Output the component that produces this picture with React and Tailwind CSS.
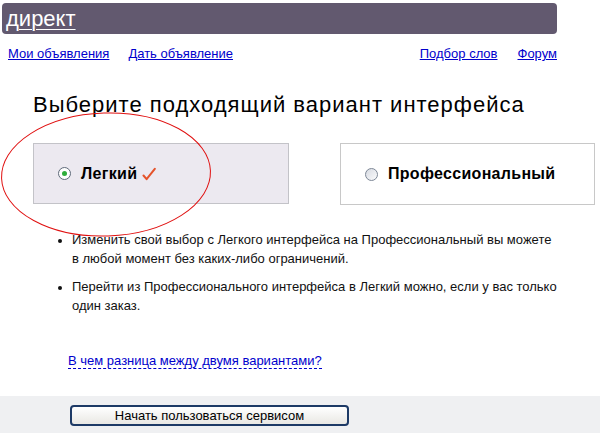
import React from "react";

const Radio = ({ checked }) => (
  <span
    className={`inline-flex items-center justify-center w-[13px] h-[13px] rounded-full border ${
      checked
        ? "border-[#5f6a7a] bg-white"
        : "border-[#7d8796] bg-gradient-to-br from-[#d7dbe2] to-[#fbfbfc]"
    }`}
  >
    {checked && <span className="w-[5px] h-[5px] rounded-full bg-[#2fae3b]" />}
  </span>
);

const Check = () => (
  <svg width="14" height="14" viewBox="0 0 14 14" className="ml-[5px]">
    <path
      d="M1.5 8.5 L4.6 12.2 L12.8 1.8"
      fill="none"
      stroke="#e5532b"
      strokeWidth="2"
      strokeLinecap="round"
      strokeLinejoin="round"
    />
  </svg>
);

export default function App() {
  return (
    <div className="relative w-[600px] h-[433px] overflow-hidden bg-white text-black font-['Liberation_Sans',Arial,sans-serif]">
      {/* Header */}
      <div className="pt-[3px] pl-[2px]">
        <div className="w-[555px] h-[31px] rounded-[4px] bg-[#62596f] pl-[4px] flex items-center">
          <a href="#" className="text-white text-[22px] leading-none underline underline-offset-[3px] decoration-1">
            директ
          </a>
        </div>
      </div>

      {/* Nav links */}
      <div className="w-[557px] mt-[12px] pl-[8px] flex justify-between text-[13px] leading-[16px] text-[#0000cc]">
        <div className="flex gap-[19px]">
          <a href="#" className="underline">Мои объявления</a>
          <a href="#" className="underline">Дать объявление</a>
        </div>
        <div className="flex gap-[20px]">
          <a href="#" className="underline">Подбор слов</a>
          <a href="#" className="underline">Форум</a>
        </div>
      </div>

      {/* Title */}
      <h1 className="mt-[30px] pl-[33px] text-[22px] leading-[26px] tracking-[1px] font-normal">
        Выберите подходящий вариант интерфейса
      </h1>

      {/* Choices */}
      <div className="mt-[25px] pl-[33px] flex gap-[51px]">
        <div className="w-[256px] h-[61px] border border-[#c3c3c8] bg-[#ece9f0] flex items-center pl-[24px]">
          <Radio checked />
          <span className="ml-[10px] text-[16px] font-bold tracking-[0.3px]">Легкий</span>
          <Check />
        </div>
        <div className="w-[255px] h-[62px] border border-[#c8c8c8] bg-white flex items-center pl-[24px]">
          <Radio />
          <span className="ml-[10px] text-[16px] font-bold tracking-[0.3px]">Профессиональный</span>
        </div>
      </div>

      {/* Notes */}
      <ul className="mt-[25px] pl-[72px] pr-[40px] text-[13px] leading-[19px] text-[#111] list-disc marker:text-[12px] flex flex-col gap-[9px]">
        <li>
          Изменить свой выбор с Легкого интерфейса на Профессиональный вы можете
          <br />в любой момент без каких-либо ограничений.
        </li>
        <li>
          Перейти из Профессионального интерфейса в Легкий можно, если у вас только
          <br />
          один заказ.
        </li>
      </ul>

      <div className="mt-[38px] pl-[68px] text-[13px] leading-[16px]">
        <a href="#" className="text-[#0000cc] border-b border-dashed border-[#0000cc]">
          В чем разница между двумя вариантами?
        </a>
      </div>

      {/* Footer */}
      <div className="absolute left-0 right-0 bottom-0 h-[37px] bg-[#eff0f2] pl-[70px] pt-[7px]">
        <button className="w-[279px] h-[21px] rounded-[4px] border-2 border-[#1d3a66] bg-gradient-to-b from-white to-[#e9e8e4] text-[13px] leading-none text-black">
          Начать пользоваться сервисом
        </button>
      </div>

      {/* Red hand-drawn ellipse */}
      <svg className="absolute left-0 top-0 pointer-events-none" width="600" height="433">
        <ellipse cx="106" cy="174.5" rx="104.5" ry="61.5" fill="none" stroke="#e01010" strokeWidth="1" transform="rotate(-2 106 174.5)" />
      </svg>
    </div>
  );
}
